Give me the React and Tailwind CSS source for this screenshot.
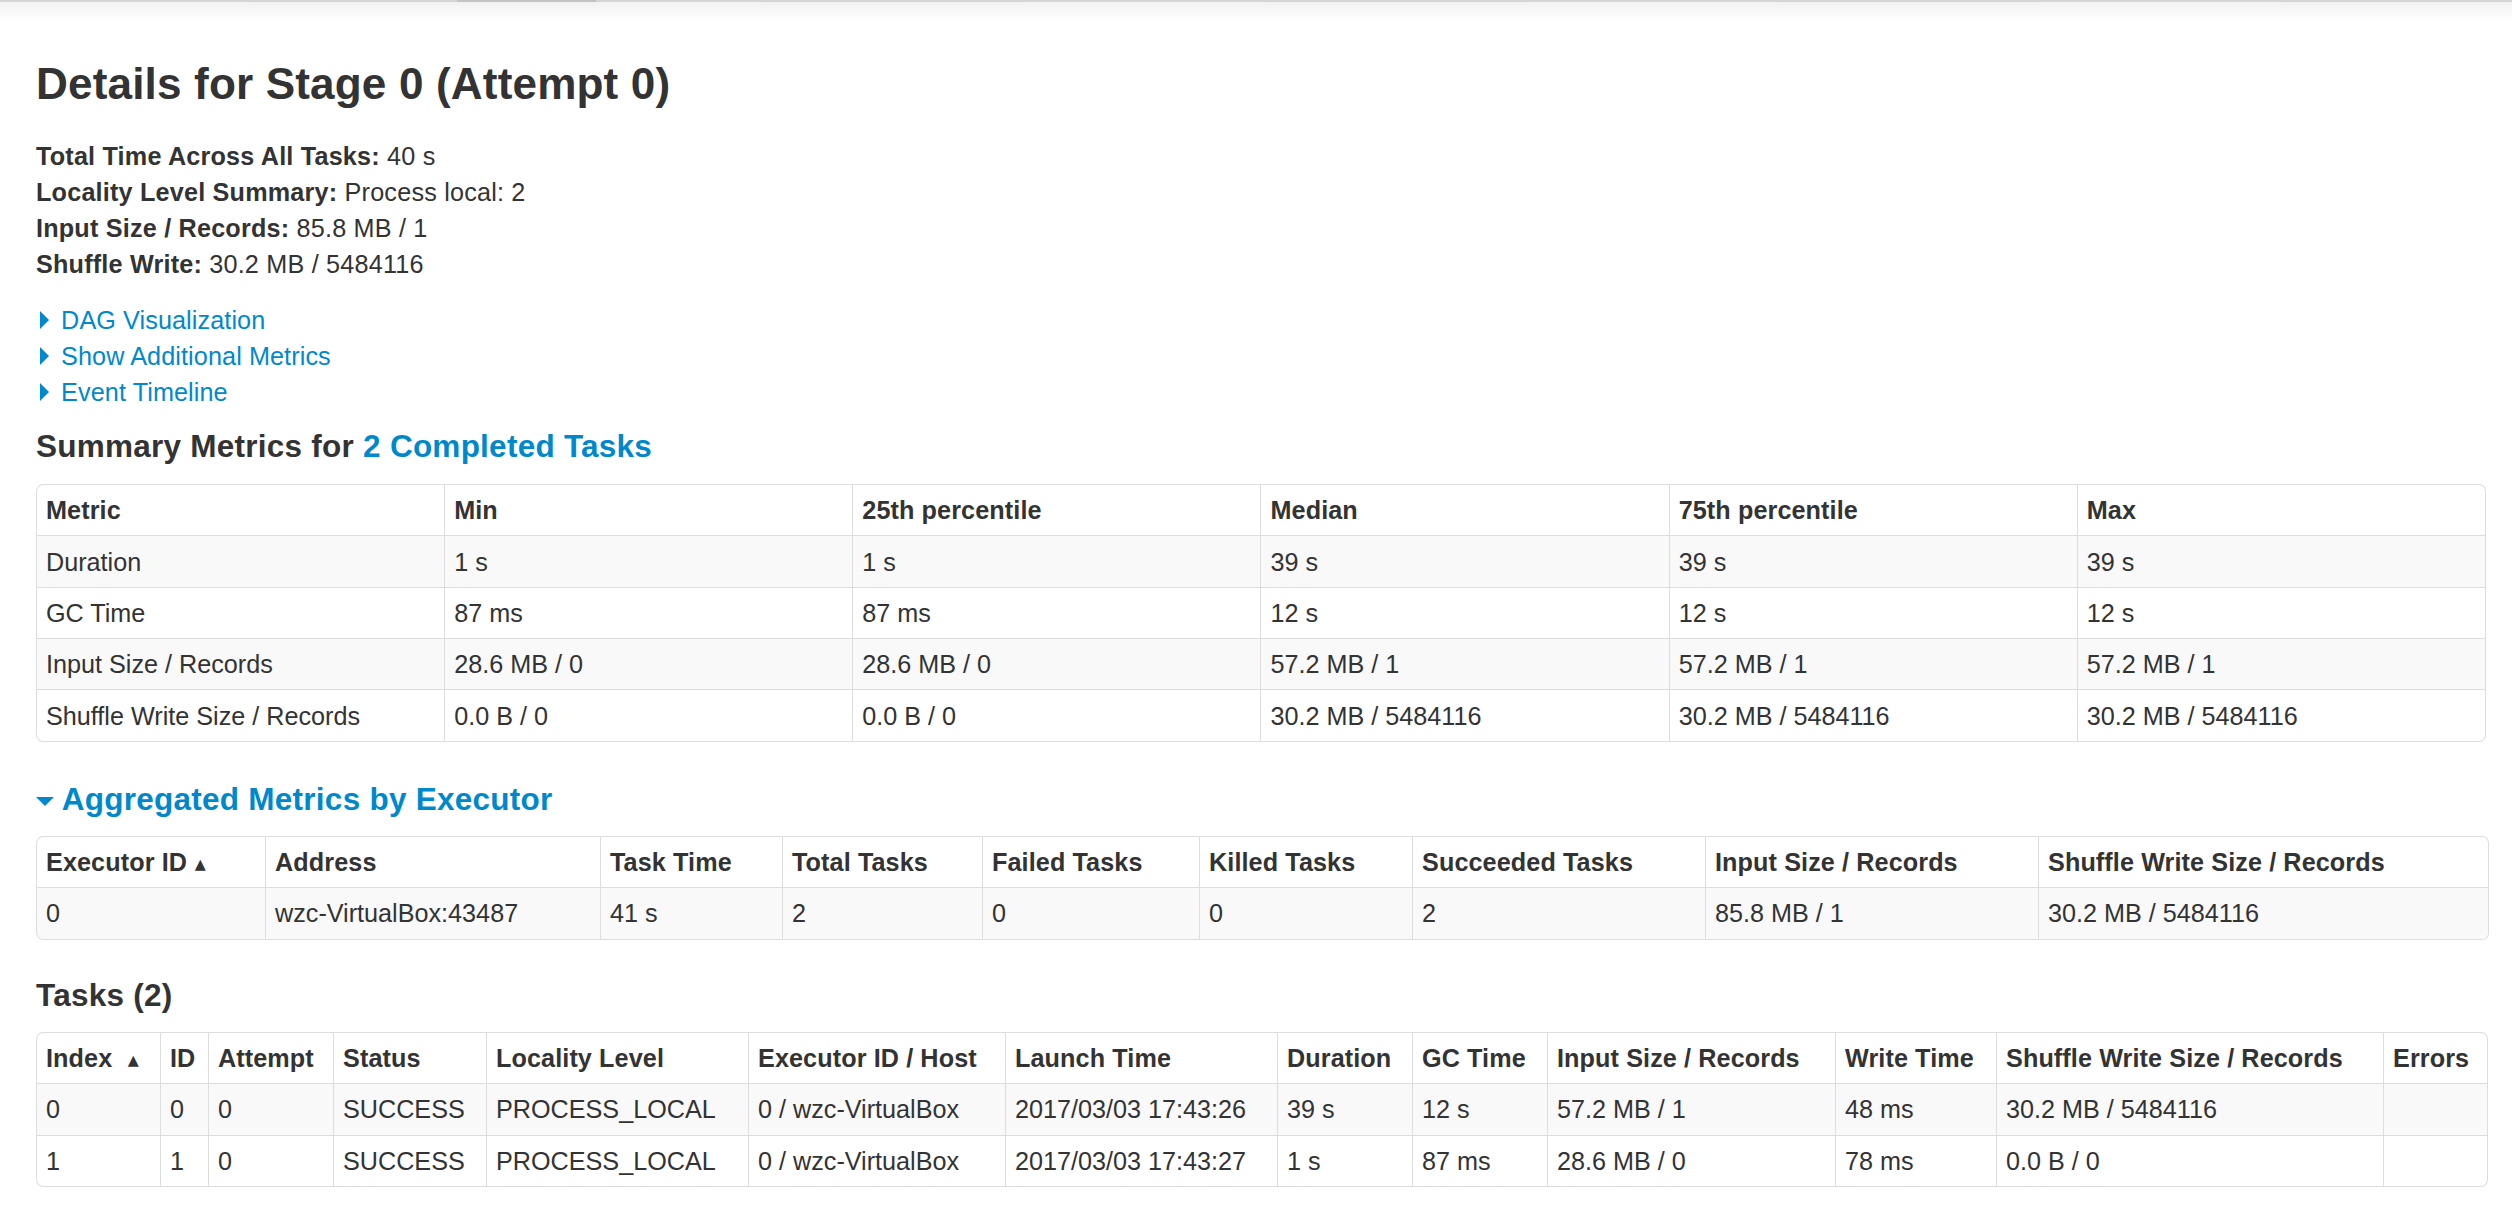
import React from 'react';
import clsx from 'clsx';

const summaryColumns = [
  { label: 'Metric' },
  { label: 'Min' },
  { label: '25th percentile' },
  { label: 'Median' },
  { label: '75th percentile' },
  { label: 'Max' },
];

const summaryRows = [
  ['Duration', '1 s', '1 s', '39 s', '39 s', '39 s'],
  ['GC Time', '87 ms', '87 ms', '12 s', '12 s', '12 s'],
  ['Input Size / Records', '28.6 MB / 0', '28.6 MB / 0', '57.2 MB / 1', '57.2 MB / 1', '57.2 MB / 1'],
  ['Shuffle Write Size / Records', '0.0 B / 0', '0.0 B / 0', '30.2 MB / 5484116', '30.2 MB / 5484116', '30.2 MB / 5484116'],
];

const executorColumns = [
  { label: 'Executor ID', sort: ' ', w: 'w-[229px]' },
  { label: 'Address', w: 'w-[335px]' },
  { label: 'Task Time', w: 'w-[182px]' },
  { label: 'Total Tasks', w: 'w-[200px]' },
  { label: 'Failed Tasks', w: 'w-[217px]' },
  { label: 'Killed Tasks', w: 'w-[213px]' },
  { label: 'Succeeded Tasks', w: 'w-[293px]' },
  { label: 'Input Size / Records', w: 'w-[333px]' },
  { label: 'Shuffle Write Size / Records', w: 'w-[450px]' },
];

const executorRows = [
  ['0', 'wzc-VirtualBox:43487', '41 s', '2', '0', '0', '2', '85.8 MB / 1', '30.2 MB / 5484116'],
];

const taskColumns = [
  { label: 'Index', sort: '\u00a0 ', w: 'w-[124px]' },
  { label: 'ID', w: 'w-[48px]' },
  { label: 'Attempt', w: 'w-[125px]' },
  { label: 'Status', w: 'w-[153px]' },
  { label: 'Locality Level', w: 'w-[262px]' },
  { label: 'Executor ID / Host', w: 'w-[257px]' },
  { label: 'Launch Time', w: 'w-[272px]' },
  { label: 'Duration', w: 'w-[135px]' },
  { label: 'GC Time', w: 'w-[135px]' },
  { label: 'Input Size / Records', w: 'w-[288px]' },
  { label: 'Write Time', w: 'w-[161px]' },
  { label: 'Shuffle Write Size / Records', w: 'w-[387px]' },
  { label: 'Errors', w: 'w-[104px]' },
];

const taskRows = [
  ['0', '0', '0', 'SUCCESS', 'PROCESS_LOCAL', '0 / wzc-VirtualBox', '2017/03/03 17:43:26', '39 s', '12 s', '57.2 MB / 1', '48 ms', '30.2 MB / 5484116', ''],
  ['1', '1', '0', 'SUCCESS', 'PROCESS_LOCAL', '0 / wzc-VirtualBox', '2017/03/03 17:43:27', '1 s', '87 ms', '28.6 MB / 0', '78 ms', '0.0 B / 0', ''],
];

function DataTable({ columns, rows, className }) {
  const last = columns.length - 1;
  return (
    <table
      className={clsx(
        'w-full table-fixed border-separate border-spacing-0 rounded-[7px] border border-l-0 border-[#ddd]',
        className
      )}
    >
      <thead>
        <tr>
          {columns.map((col, i) => (
            <th
              key={i}
              className={clsx(
                'border-l border-[#ddd] px-[9px] py-[7.2px] text-left align-bottom font-bold tracking-[0.1px]',
                col.w,
                i === 0 && 'rounded-tl-[7px]',
                i === last && 'rounded-tr-[7px]'
              )}
            >
              {col.label}
              {col.sort && (
                <span className="font-['DejaVu_Sans',sans-serif] text-[22px] leading-none">{col.sort}▴</span>
              )}
            </th>
          ))}
        </tr>
      </thead>
      <tbody>
        {rows.map((row, r) => (
          <tr key={r} className={r % 2 === 0 ? 'bg-[#f9f9f9]' : ''}>
            {row.map((cell, i) => (
              <td
                key={i}
                className={clsx(
                  'border-l border-t border-[#ddd] px-[9px] py-[7.2px] align-top',
                  r === rows.length - 1 && i === 0 && 'rounded-bl-[7px]',
                  r === rows.length - 1 && i === last && 'rounded-br-[7px]'
                )}
              >
                {cell}
              </td>
            ))}
          </tr>
        ))}
      </tbody>
    </table>
  );
}

function ClosedToggle({ label }) {
  return (
    <div>
      <span className="ml-[3.6px] mr-[5.4px] inline-block h-0 w-0 border-y-[9px] border-l-[9px] border-y-transparent border-l-[#0088cc]" />{' '}
      <a className="cursor-pointer text-[#0088cc]">{label}</a>
    </div>
  );
}

export default function App() {
  return (
    <div className="min-h-screen bg-white font-['Liberation_Sans',Arial,sans-serif] text-[25.2px] leading-[36px] text-[#333]">
      {/* bottom edge of the navbar, scrolled mostly out of view */}
      <div className="flex h-[2px] bg-[#d4d4d4]">
        <div className="w-[457px]" />
        <div className="w-[139px] bg-[#c2c2c2]" />
      </div>
      <div className="h-[18px] bg-linear-to-b from-[#f1f1f1] to-white" />

      <div className="pl-[36px] pr-[26px]">
        <h3 className="mt-[27.7px] text-[44.1px] font-bold leading-[72px] tracking-[0.15px]">
          Details for Stage 0 (Attempt 0)
        </h3>

        <ul className="mt-[18.3px] tracking-[0.2px]">
          <li>
            <strong>Total Time Across All Tasks: </strong>40 s
          </li>
          <li>
            <strong>Locality Level Summary: </strong>Process local: 2
          </li>
          <li>
            <strong>Input Size / Records: </strong>85.8 MB / 1
          </li>
          <li>
            <strong>Shuffle Write: </strong>30.2 MB / 5484116
          </li>
        </ul>

        <div className="mt-[20px] tracking-[0.1px]">
          <ClosedToggle label="DAG Visualization" />
          <ClosedToggle label="Show Additional Metrics" />
          <ClosedToggle label="Event Timeline" />
        </div>

        <h4 className="mt-[18.4px] text-[31.5px] font-bold leading-[36px] tracking-[0.25px]">
          Summary Metrics for <a className="text-[#0088cc]">2 Completed Tasks</a>
        </h4>
        <DataTable className="mt-[19.6px]" columns={summaryColumns} rows={summaryRows} />

        <h4 className="mt-[39px] text-[31.5px] font-bold leading-[36px] tracking-[0.25px]">
          <span className="mb-[3.6px] inline-block h-0 w-0 border-x-[9px] border-t-[9px] border-x-transparent border-t-[#0088cc]" />{' '}
          <a className="cursor-pointer text-[#0088cc]">Aggregated Metrics by Executor</a>
        </h4>
        <DataTable className="mt-[19px]" columns={executorColumns} rows={executorRows} />

        <h4 className="mt-[37.2px] text-[31.5px] font-bold leading-[36px] tracking-[0.25px]">Tasks (2)</h4>
        <DataTable className="mt-[19px]" columns={taskColumns} rows={taskRows} />
      </div>
    </div>
  );
}
